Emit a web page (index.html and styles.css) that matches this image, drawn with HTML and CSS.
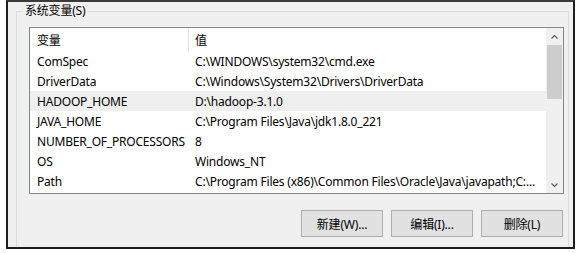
FILE: index.html
```html
<!DOCTYPE html>
<html lang="zh-CN">
<head>
  <meta charset="UTF-8" />
  <title>系统变量</title>
  <link rel="stylesheet" href="styles.css">
</head>
<body>
  <div class="frame">
    <fieldset class="group">
      <legend>系统变量(S)</legend>

      <div class="listbox">
        <div class="list">
          <div class="row head">
            <div class="cell name">变量</div>
            <div class="cell value">值</div>
          </div>
          <div class="row">
            <div class="cell name">ComSpec</div>
            <div class="cell value">C:\WINDOWS\system32\cmd.exe</div>
          </div>
          <div class="row">
            <div class="cell name">DriverData</div>
            <div class="cell value">C:\Windows\System32\Drivers\DriverData</div>
          </div>
          <div class="row hover">
            <div class="cell name">HADOOP_HOME</div>
            <div class="cell value">D:\hadoop-3.1.0</div>
          </div>
          <div class="row">
            <div class="cell name">JAVA_HOME</div>
            <div class="cell value">C:\Program Files\Java\jdk1.8.0_221</div>
          </div>
          <div class="row">
            <div class="cell name">NUMBER_OF_PROCESSORS</div>
            <div class="cell value">8</div>
          </div>
          <div class="row">
            <div class="cell name">OS</div>
            <div class="cell value">Windows_NT</div>
          </div>
          <div class="row">
            <div class="cell name">Path</div>
            <div class="cell value">C:\Program Files (x86)\Common Files\Oracle\Java\javapath;C:...</div>
          </div>
        </div>

        <div class="scrollbar">
          <div class="arrow">
            <svg width="7" height="4" viewBox="0 0 7 4"><polyline points="0.5,3.5 3.5,0.5 6.5,3.5" fill="none" stroke="#606060" stroke-width="1.2"/></svg>
          </div>
          <div class="thumb"></div>
          <div class="arrow down">
            <svg width="7" height="4" viewBox="0 0 7 4"><polyline points="0.5,0.5 3.5,3.5 6.5,0.5" fill="none" stroke="#606060" stroke-width="1.2"/></svg>
          </div>
        </div>
      </div>

      <div class="buttons">
        <button>新建(W)...</button>
        <button>编辑(I)...</button>
        <button>删除(L)</button>
      </div>
    </fieldset>
  </div>
</body>
</html>
```

FILE: styles.css
```css
body {
  margin: 0;
  background: #fff;
  font-family: 'Noto Sans', 'Noto Sans CJK SC', sans-serif;
  font-size: 12px;
  letter-spacing: -0.2px;
  color: #000;
}

.frame {
  box-sizing: border-box;
  width: 569px;
  height: 249px;
  margin-left: 6px;
  border: 2px solid #1e1e1e;
  border-top-color: #3a3a3a;
  background: #f0f0f0;
  overflow: hidden;
}

.group {
  margin: 1px 4px 0 8px;
  padding: 0;
  height: 260px;
  border: 1px solid #dcdcdc;
}

.group legend {
  margin-left: 6px;
  padding: 0 2px;
  line-height: 16px;
}

.listbox {
  box-sizing: border-box;
  display: flex;
  width: 535px;
  height: 167px;
  margin: 8px 0 0 12px;
  border: 1px solid #828790;
  background: #fff;
}

.list {
  flex: 1;
}

.row {
  display: grid;
  grid-template-columns: 159px 1fr;
  line-height: 20px;
  white-space: nowrap;
}

.row.head {
  line-height: 23px;
}

.row .cell {
  padding-top: 1px;
  height: 20px;
  box-sizing: border-box;
}

.row.head .cell {
  height: 23px;
}

.row.hover {
  background: #efefef;
}

.cell.name {
  padding-left: 7px;
}

.cell.value {
  padding-left: 6px;
  overflow: hidden;
}

.row.head .cell.name {
  border-right: 1px solid #e5e5e5;
}

.scrollbar {
  width: 17px;
  display: flex;
  flex-direction: column;
  background: #f0f0f0;
}

.arrow {
  height: 17px;
  display: flex;
  align-items: center;
  justify-content: center;
}

.arrow.down {
  margin-top: auto;
}

.thumb {
  height: 54px;
  margin: 0 1px;
  background: #cdcdcd;
}

.buttons {
  display: flex;
  justify-content: flex-end;
  gap: 8px;
  width: 535px;
  margin: 16px 0 0 12px;
  padding-right: 1px;
  box-sizing: border-box;
}

.buttons button {
  width: 82px;
  height: 27px;
  padding: 0;
  border: 1px solid #adadad;
  background: #e1e1e1;
  font-family: inherit;
  font-size: 12px;
  letter-spacing: inherit;
  color: #000;
}
```
